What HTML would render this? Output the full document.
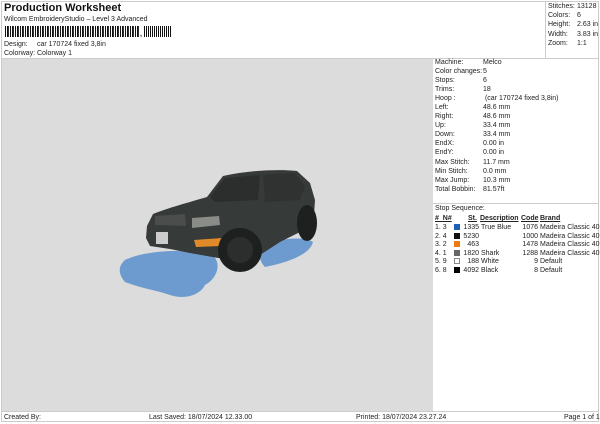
<!DOCTYPE html>
<html><head><style>
*{margin:0;padding:0;box-sizing:border-box}
body{width:600px;height:424px;background:#fff;font-family:"Liberation Sans",sans-serif;font-size:7px;color:#222;position:relative;overflow:hidden}
.a{position:absolute;white-space:nowrap;line-height:9px}
.sw{display:inline-block;width:6px;height:6px;vertical-align:-1px}
</style></head><body>
<div style="position:absolute;left:1px;top:1px;width:598px;height:421px;border:1px solid #ccc"></div>
<div class="a" style="left:4px;top:2px;font-size:11px;font-weight:bold;line-height:13px;color:#111">Production Worksheet</div>
<div class="a" style="left:4px;top:15px">Wilcom EmbroideryStudio – Level 3 Advanced</div>
<div style="position:absolute;left:5px;top:26px;width:134px;height:11px;background:repeating-linear-gradient(90deg,#111 0 1px,#fff 1px 2px,#111 2px 3px,#333 3px 4px,#fff 4px 5px)"></div>
<div class="a" style="left:140px;top:30px;font-weight:bold">,</div>
<div style="position:absolute;left:144px;top:26px;width:28px;height:11px;background:repeating-linear-gradient(90deg,#111 0 1px,#fff 1px 2px,#111 2px 3px,#fff 3px 4px)"></div>
<div class="a" style="left:4px;top:40px">Design:</div><div class="a" style="left:37px;top:40px">car 170724 fixed 3,8in</div>
<div class="a" style="left:4px;top:49px">Colorway:</div><div class="a" style="left:37px;top:49px">Colorway 1</div>
<div style="position:absolute;left:545px;top:1px;width:1px;height:57px;background:#ccc"></div>
<div style="position:absolute;left:1px;top:58px;width:598px;height:1px;background:#ccc"></div>
<div class="a" style="left:548px;top:2px;line-height:9.2px">Stitches:<br>Colors:<br>Height:<br>Width:<br>Zoom:</div>
<div class="a" style="left:577px;top:2px;line-height:9.2px">13128<br>6<br>2.63 in<br>3.83 in<br>1:1</div>
<div style="position:absolute;left:2px;top:59px;width:431px;height:353px;background:#dcdcdc"></div>
<div style="position:absolute;left:1px;top:411px;width:598px;height:1px;background:#ccc"></div>
<div class="a" style="left:435px;top:58px;line-height:9.05px">Machine:<br>Color changes:<br>Stops:<br>Trims:<br>Hoop :<br>Left:<br>Right:<br>Up:<br>Down:<br>EndX:<br>EndY:<br>Max Stitch:<br>Min Stitch:<br>Max Jump:<br>Total Bobbin:</div>
<div class="a" style="left:483px;top:58px;line-height:9.05px">Melco<br>5<br>6<br>18<br>&nbsp;(car 170724 fixed 3,8in)<br>48.6 mm<br>48.6 mm<br>33.4 mm<br>33.4 mm<br>0.00 in<br>0.00 in<br>11.7 mm<br>0.0 mm<br>10.3 mm<br>81.57ft</div>
<div style="position:absolute;left:433px;top:203px;width:166px;height:1px;background:#ccc"></div>
<div class="a" style="left:435px;top:204px">Stop Sequence:</div>
<div class="a" style="left:435px;top:214px;font-weight:bold;text-decoration:underline">#&nbsp; N#</div>
<div class="a" style="left:468px;top:214px;font-weight:bold;text-decoration:underline">St.</div>
<div class="a" style="left:480px;top:214px;font-weight:bold;text-decoration:underline">Description</div>
<div class="a" style="left:521px;top:214px;font-weight:bold;text-decoration:underline">Code</div>
<div class="a" style="left:540px;top:214px;font-weight:bold;text-decoration:underline">Brand</div>
<div class="a" style="left:435px;top:224px;line-height:8.6px">1. 3<br>2. 4<br>3. 2<br>4. 1<br>5. 9<br>6. 8</div>
<div class="a" style="left:454px;top:224px;line-height:8.6px"><span class="sw" style="background:#1f5fb5"></span><br><span class="sw" style="background:#111"></span><br><span class="sw" style="background:#ee7a10"></span><br><span class="sw" style="background:#666"></span><br><span class="sw" style="background:#fff;border:1px solid #888"></span><br><span class="sw" style="background:#000"></span></div>
<div class="a" style="left:462px;top:224px;line-height:8.6px;text-align:right;width:17px">1335<br>5230<br>463<br>1820<br>188<br>4092</div>
<div class="a" style="left:481px;top:224px;line-height:8.6px">True Blue<br><br><br>Shark<br>White<br>Black</div>
<div class="a" style="left:518px;top:224px;line-height:8.6px;text-align:right;width:20px">1076<br>1000<br>1478<br>1288<br>9<br>8</div>
<div class="a" style="left:540px;top:224px;line-height:8.6px">Madeira Classic 40<br>Madeira Classic 40<br>Madeira Classic 40<br>Madeira Classic 40<br>Default<br>Default</div>
<div class="a" style="left:4px;top:413px">Created By:</div>
<div class="a" style="left:149px;top:413px">Last Saved: 18/07/2024 12.33.00</div>
<div class="a" style="left:356px;top:413px">Printed: 18/07/2024 23.27.24</div>
<div class="a" style="left:564px;top:413px">Page 1 of 1</div>
<svg style="position:absolute;left:100px;top:150px" width="240" height="160" viewBox="0 0 240 160">
<g fill="#5a8fcc" opacity="0.85">
<path d="M25 110 C45 100 90 98 112 105 C122 112 118 128 105 135 C100 145 85 150 70 145 C55 140 40 138 25 132 C18 124 18 116 25 110Z"/>
<path d="M162 95 C180 88 205 86 213 92 C210 104 190 112 165 117 C158 110 158 100 162 95Z"/>
</g>
<path d="M47 76 L53 64 C68 58 90 52 107 47 L123 26 C150 20 180 19 197 21 L210 33 L215 50 L214 65 L200 82 L180 92 L160 105 L140 110 L118 108 L90 103 L70 99 L50 96 L46 88Z" fill="#363a38"/>
<path d="M110 47 L125 28 L160 25 L158 50 L115 52Z" fill="#2b2e2d"/>
<path d="M163 25 L195 23 L205 36 L200 50 L165 52Z" fill="#2f3231"/>
<path d="M55 66 L85 64 L86 76 L55 75Z" fill="#4a4d4b"/>
<path d="M92 68 L119 66 L120 75 L92 78Z" fill="#8a8c88"/>
<path d="M94 90 L122 88 L121 96 L96 97Z" fill="#e08a2a"/>
<rect x="56" y="82" width="12" height="12" fill="#ccc"/>
<circle cx="140" cy="100" r="22" fill="#1e2020"/><circle cx="140" cy="100" r="13" fill="#2c2e2e"/>
<ellipse cx="207" cy="73" rx="10" ry="18" fill="#1e2020"/>
</svg>
</body></html>
